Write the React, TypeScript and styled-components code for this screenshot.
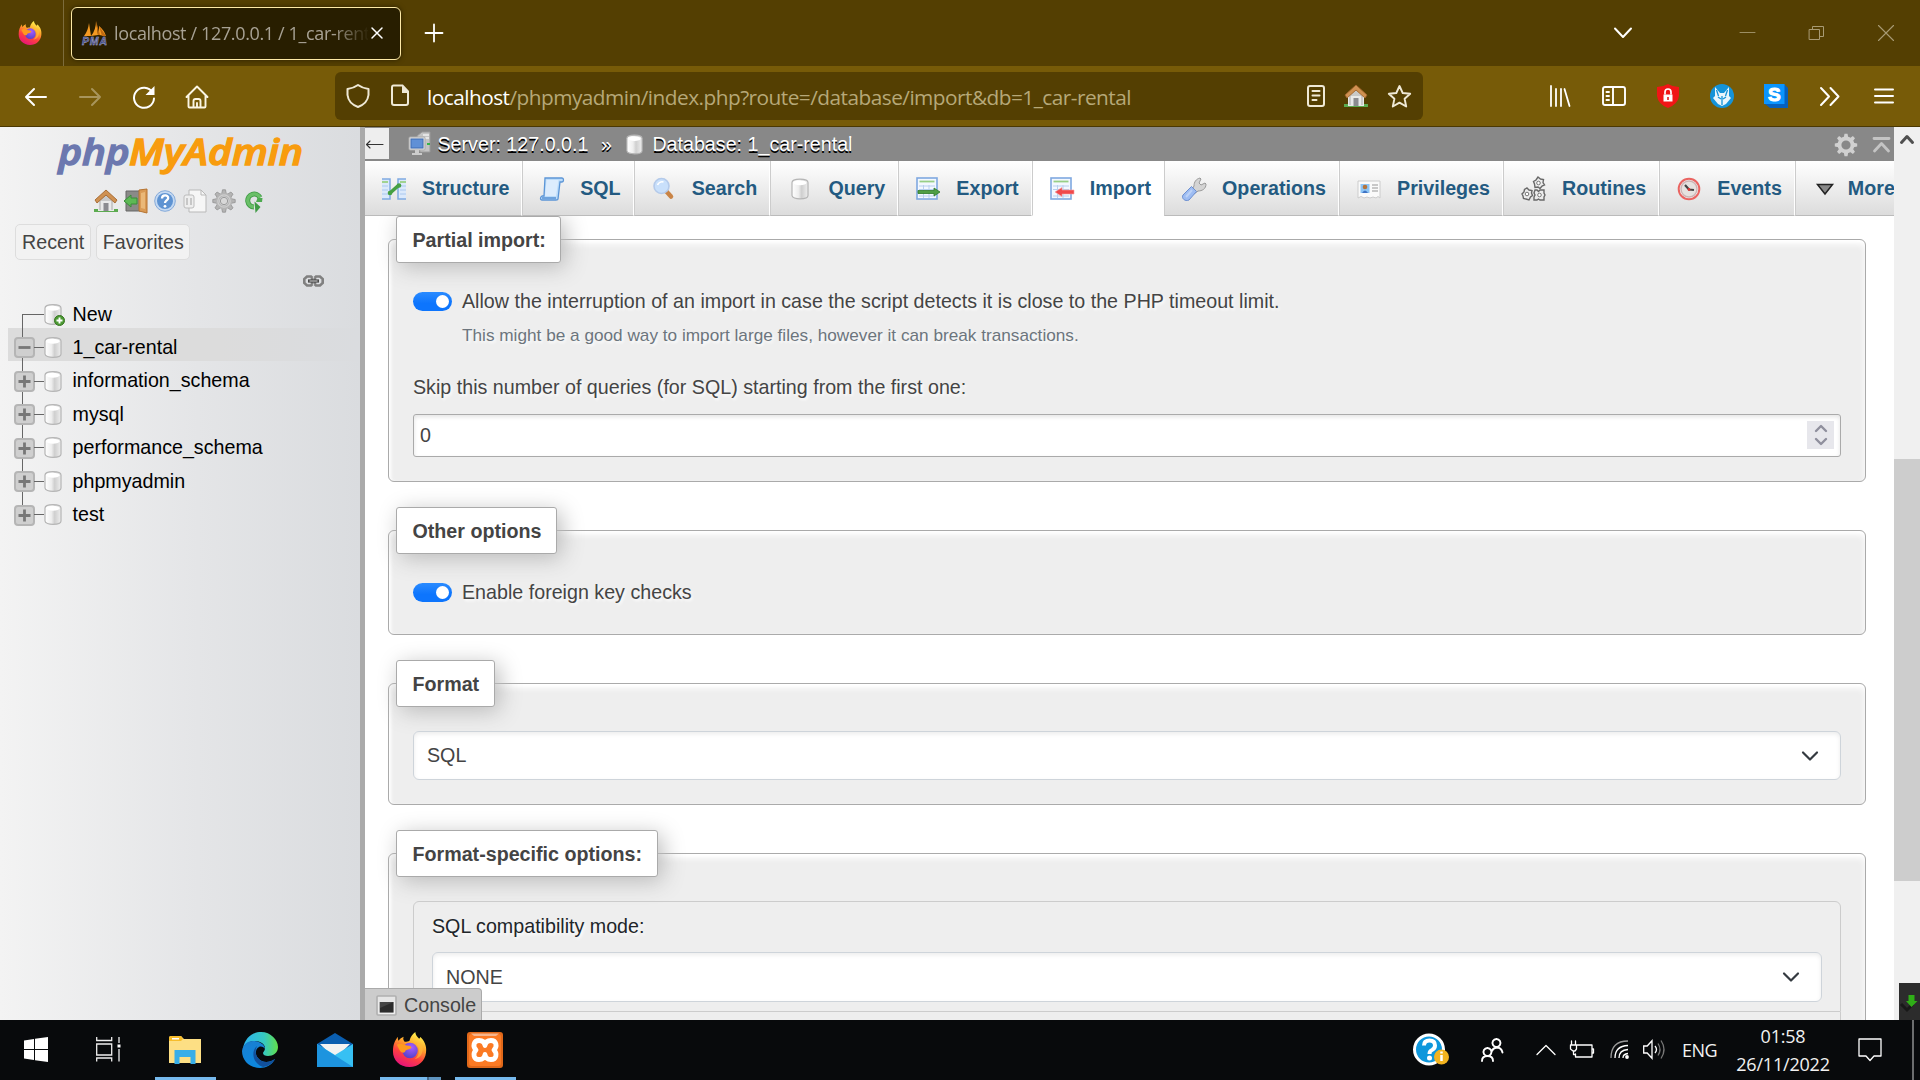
import React from "react";
import styled, { createGlobalStyle, css } from "styled-components";

const uiFont = `"Open Sans", "Noto Sans", sans-serif`;
const pageFont = `"Liberation Sans", Arial, sans-serif`;

const Global = createGlobalStyle`
  *, *::before, *::after { box-sizing: border-box; }
  html, body { margin: 0; padding: 0; background: #fff; overflow: hidden; }
  svg { display: block; flex: none; overflow: visible; }
`;

const Screen = styled.div`
  position: relative;
  width: 1920px;
  height: 1080px;
  display: flex;
  flex-direction: column;
  overflow: hidden;
  font-family: ${pageFont};
  font-size: 19.68px;
  color: #444;
`;

/* ---------- browser chrome ---------- */

const TabStrip = styled.div`
  height: 66px;
  flex: none;
  display: flex;
  align-items: center;
  background: #543f02;
`;

const PinnedTab = styled.div`
  width: 64px;
  height: 66px;
  padding: 0 3px 0 0;
  display: flex;
  align-items: center;
  justify-content: center;
  border-right: 1px solid #7d6c3c;
`;

const BrowserTab = styled.div`
  width: 330px;
  height: 53px;
  margin: 0 0 0 7px;
  padding: 0 17px 0 10px;
  display: flex;
  align-items: center;
  gap: 8px;
  border: 1px solid #fde9a6;
  border-radius: 6px;
  background: #281e00;
  box-shadow: 0 0 5px rgba(0, 0, 0, 0.5);
`;

const TabTitle = styled.span`
  flex: 1;
  margin: 0 -5px 0 -1px;
  overflow: hidden;
  white-space: nowrap;
  font: 18px/24px ${uiFont};
  letter-spacing: -0.36px;
  color: #a8a294;
  mask-image: linear-gradient(to right, #000 218px, transparent 256px);
`;

const NewTab = styled.div`
  margin-left: 24px;
`;

const WindowControls = styled.div`
  margin-left: auto;
  display: flex;
  align-items: center;
`;

const ControlCell = styled.div<{ $w: number }>`
  width: ${(p) => p.$w}px;
  height: 66px;
  display: flex;
  align-items: center;
  justify-content: center;
`;

const NavBar = styled.div`
  height: 61px;
  flex: none;
  display: flex;
  align-items: center;
  padding: 0 9px;
  background: #775b08;
  border-bottom: 1px solid #4b3802;
`;

const NavButton = styled.div`
  width: 54px;
  height: 48px;
  display: flex;
  align-items: center;
  justify-content: center;
`;

const LeftButtons = styled.div`
  display: flex;
  padding-top: 2px;
`;

const UrlBar = styled.div`
  width: 1088px;
  height: 48px;
  margin: 0 auto 0 110px;
  padding: 0 12px 0 11px;
  display: flex;
  align-items: center;
  border-radius: 6px;
  background: #543f02;
`;

const UrlText = styled.div`
  flex: 1;
  margin-left: 17px;
  padding-top: 2px;
  font: 20.8px/30px ${uiFont};
  letter-spacing: -0.52px;
  white-space: nowrap;
  color: #b6a878;
  b { font-weight: 400; color: #fff; }
`;

const UrlIcons = styled.div<{ $gap: number }>`
  display: flex;
  align-items: center;
  gap: ${(p) => p.$gap}px;
`;

/* ---------- page ---------- */

const Page = styled.div`
  height: 893px;
  flex: none;
  display: flex;
`;

const Sidebar = styled.aside`
  width: 365px;
  flex: none;
  border-right: 5px solid #aaa;
  background: linear-gradient(to right, #f3f3f3, #e4e5e7 55%, #dadcdf);
`;

const Logo = styled.div`
  height: 58px;
  padding: 0 0 0 57px;
`;

const QuickIcons = styled.div`
  height: 31px;
  padding-left: 94px;
  display: flex;
  align-items: center;
  gap: 5.6px;
`;

const PanelButtons = styled.div`
  display: flex;
  gap: 5px;
  padding: 8px 0 0 15px;
`;

const PanelButton = styled.div`
  height: 36px;
  padding: 0 5.5px 0 6px;
  border: 1px solid #ddd;
  border-radius: 5px;
  background: #f2f2f2;
  line-height: 34px;
`;

const LinkRow = styled.div`
  height: 34.5px;
  padding: 15px 0 0 303px;
`;

const TreeRow = styled.div<{ $active?: boolean }>`
  height: 33.45px;
  margin-left: 8px;
  display: flex;
  align-items: center;
  color: #000;
  ${(p) => p.$active && css`background: linear-gradient(to right, #dcdcdc 60%, #dadcdf);`}
`;

const Branch = styled.div`
  width: 26px;
  height: 33.45px;
  padding-left: 5px;
  display: flex;
  flex-direction: column;
`;

const Stem = styled.i<{ $h: number; $hidden?: boolean }>`
  width: 1px;
  height: ${(p) => p.$h}px;
  margin-left: 9px;
  background: ${(p) => (p.$hidden ? "transparent" : "#666")};
`;

const Elbow = styled.i`
  width: 22px;
  height: 14px;
  margin: 19.5px 0 0 9px;
  border-left: 1px solid #666;
  border-top: 1px solid #666;
`;

const Expander = styled.div`
  width: 21px;
  height: 21px;
  margin-left: 0.6px;
  flex: none;
  display: flex;
  align-items: center;
  justify-content: center;
  border: 2px solid #b5b5b5;
  border-radius: 4px;
  background: #cfcfcf;
`;

const Twig = styled.i<{ $on: boolean }>`
  width: 10px;
  height: 1px;
  margin-top: 6px;
  background: ${(p) => (p.$on ? "#666" : "transparent")};
`;

const TreeIcon = styled.div`
  width: 28px;
  padding-top: 6px;
`;

const TreeLabel = styled.span`
  padding-top: 5.6px;
  margin-left: 0.5px;
`;

const Main = styled.main`
  width: 1529px;
  display: flex;
  flex-direction: column;
  overflow: hidden;
  background: #fff;
`;

const ServerBar = styled.div`
  height: 34px;
  flex: none;
  display: flex;
  align-items: center;
  background: #888;
  color: #fff;
  text-shadow: 0 1.5px 0 #000;
  white-space: pre;
`;

const Collapse = styled.div`
  width: 24px;
  height: 31px;
  margin: -1px 19px 0 0;
  display: flex;
  align-items: center;
  background: #eee;
`;

const Crumb = styled.span<{ $l: number }>`
  margin-left: ${(p) => p.$l}px;
`;

const BarTools = styled.div`
  margin-left: auto;
  padding: 2px 4px 0 0;
  display: flex;
  align-items: center;
  gap: 15px;
`;

const Tabs = styled.nav`
  height: 55px;
  flex: none;
  display: flex;
`;

const Tab = styled.div<{ $active?: boolean; $first?: boolean; $last?: boolean }>`
  flex: none;
  display: flex;
  align-items: center;
  gap: ${(p) => (p.$last ? 11 : 16.1)}px;
  padding: 1px ${(p) => (p.$first ? 11.5 : 12)}px 0 17px;
  font-weight: 700;
  color: #235a81;
  white-space: nowrap;
  border-left: ${(p) => (p.$first ? "0" : "1px solid #ccc")};
  ${(p) =>
    p.$active
      ? css`background: #fff; border-right: 1px solid #fff; border-bottom: 1px solid #fff;`
      : css`
          background: linear-gradient(#fff, #dcdcdc);
          border-right: 1px solid #fff;
          border-bottom: 1px solid #bbb;
        `}
`;

const Content = styled.div`
  flex: 1;
  min-height: 0;
  padding: 23px 28px 0 23px;
  overflow: hidden;
`;

const Fieldset = styled.section<{ $h: number }>`
  height: ${(p) => p.$h}px;
  margin-bottom: 48px;
  padding: 0 24px;
  border: 1px solid #aaa;
  border-radius: 6px;
  background: #eee;
  box-shadow: 1.5px 1.5px 3px #fff inset, 0 4px 6px #fff inset;
  text-shadow: 1.5px 1.5px 3px #fff;
`;

const Legend = styled.h2`
  width: max-content;
  height: 47px;
  margin: -24px 0 0 -17px;
  padding: 0 14.5px 0 15.5px;
  border: 1px solid #aaa;
  border-radius: 3px;
  background: #fff;
  box-shadow: 4.5px 4.5px 22px #bbb;
  font-size: 19.68px;
  line-height: 46px;
  text-shadow: none;
`;

const SwitchRow = styled.label`
  display: flex;
  align-items: center;
  gap: 10px;
  height: 30px;
  margin-top: 23px;
`;

const Switch = styled.span`
  width: 39px;
  height: 19px;
  padding: 3px;
  display: flex;
  justify-content: flex-end;
  border-radius: 10px;
  background: linear-gradient(#2a8bff, #0d75fd 60%);
  &::after {
    content: "";
    width: 13px;
    height: 13px;
    border-radius: 50%;
    background: #fff;
  }
`;

const Hint = styled.p`
  margin: 6px 0 0 49px;
  font-size: 17.22px;
  line-height: 26px;
  color: #6c757d;
`;

const FieldLabel = styled.p<{ $dark?: boolean; $top: number }>`
  margin: ${(p) => p.$top}px 0 0;
  line-height: 30px;
  color: ${(p) => (p.$dark ? "#212529" : "#444")};
`;

const NumberInput = styled.div`
  height: 43px;
  margin-top: 12px;
  padding: 0 6px;
  display: flex;
  align-items: center;
  justify-content: space-between;
  border: 1px solid #aaa;
  border-radius: 3px;
  background: #fff;
  box-shadow: inset 0 2px 4px #e4e4e4;
`;

const Spinner = styled.div`
  width: 27px;
  height: 28px;
  margin-top: -1px;
  display: flex;
  align-items: center;
  justify-content: center;
  background: #e7e7ec;
`;

const Select = styled.div<{ $top: number; $h: number }>`
  height: ${(p) => p.$h}px;
  margin-top: ${(p) => p.$top}px;
  padding: 0 21px 0 13px;
  display: flex;
  align-items: center;
  justify-content: space-between;
  border: 1px solid #ced4da;
  border-radius: 6px;
  background: #fff;
  box-shadow: inset 0 2px 4px #ececec;
`;

const OptionCard = styled.div`
  height: 111px;
  margin-top: 24px;
  padding: 0 18px;
  border: 1px solid #ccc;
  border-radius: 6px 6px 0 0;
`;

const OptionNext = styled.div`
  height: 60px;
  border: solid #ccc;
  border-width: 0 1px;
`;

const ConsoleTab = styled.div`
  position: absolute;
  left: 365px;
  top: 988px;
  width: 117px;
  height: 32px;
  padding: 1px 0 0 11px;
  display: flex;
  align-items: center;
  gap: 7px;
  border: solid #aaa;
  border-width: 1px 1px 0 0;
  border-radius: 0 4px 0 0;
  background: #ccc;
`;

const ScrollTrack = styled.div`
  width: 26px;
  flex: none;
  display: flex;
  flex-direction: column;
  align-items: center;
  background: #f0f0f0;
`;

const ScrollUp = styled.div`
  height: 332px;
  padding-top: 8px;
`;

const Thumb = styled.div`
  width: 26px;
  height: 422px;
  background: #cdcdcd;
`;

const DownloadBadge = styled.div`
  width: 21px;
  height: 37px;
  margin: auto 0 0 auto;
  background: #2c2c2c;
`;

/* ---------- taskbar ---------- */

const Taskbar = styled.footer`
  height: 60px;
  flex: none;
  display: flex;
  background: #080a0c;
  color: #f2f2f2;
  font-family: ${uiFont};
`;

const TaskButton = styled.div<{ $w?: number; $pad?: number; $line?: "one" | "many" }>`
  width: ${(p) => p.$w ?? 75}px;
  height: 60px;
  padding: 0 ${(p) => p.$pad ?? 0}px 1px 0;
  display: flex;
  align-items: center;
  justify-content: center;
  background: ${(p) =>
      p.$line === "one"
        ? "linear-gradient(#76b9ed, #76b9ed)"
        : p.$line === "many"
        ? "linear-gradient(to right, #76b9ed 47px, #44698a 47px, #44698a 49px, #5e93bf 49px)"
        : "none"}
    8px bottom / 61px 3px no-repeat;
`;

const Tray = styled.div`
  margin-left: auto;
  display: flex;
  align-items: center;
`;

const TrayItem = styled.div<{ $w: number }>`
  width: ${(p) => p.$w}px;
  padding-bottom: 1px;
  display: flex;
  justify-content: center;
`;

const Lang = styled.div`
  width: 55px;
  text-align: center;
  font-size: 18px;
  line-height: 24px;
  letter-spacing: -0.6px;
  padding-bottom: 1px;
`;

const Clock = styled.div`
  width: 112px;
  text-align: center;
  font-size: 18px;
  line-height: 28px;
  letter-spacing: -0.2px;
  white-space: nowrap;
`;

const ShowDesktop = styled.div`
  width: 8px;
  height: 60px;
  border-left: 2px solid #6b6d6e;
`;

/* ---------- drawings ---------- */

type Size = { s?: number };

const Firefox = ({ s = 24, id }: Size & { id: string }) => (
  <svg width={s} height={s} viewBox="0 0 36 36">
    <defs>
      <linearGradient id={id + "a"} x1="0.8" y1="0" x2="0.35" y2="1">
        <stop offset="0.05" stopColor="#fff44f" />
        <stop offset="0.4" stopColor="#ffa02a" />
        <stop offset="0.68" stopColor="#ff4040" />
        <stop offset="1" stopColor="#e6147a" />
      </linearGradient>
      <radialGradient id={id + "b"} cx="0.6" cy="0.3" r="0.8">
        <stop offset="0" stopColor="#a85cff" />
        <stop offset="1" stopColor="#4b3fc4" />
      </radialGradient>
    </defs>
    <path d="M24 0c0 3 2 5 4 7 1-1 1-1 1-2 4 4 7 9 6 16C34 30 27 36 18 36 8 36 1 29 1 20 1 13 3 9 6 5c0 2 0 3 1 4 1-2 3-3 5-4-1 2 0 4 1 5 2 0 4 0 5-1C19 5 21 2 24 0Z" fill={`url(#${id}a)`} />
    <circle cx="18.5" cy="19" r="8" fill={`url(#${id}b)`} />
    <path d="M5 13c4-2 7 0 10 1 3 0 5 1 5 2-1 2-4 2-6 3-1 3-4 3-6 0-1-2-2-4-3-6Z" fill="#ff9a1e" />
    <path d="M25 12c4 4 4 12-2 16 7-1 10-8 8-14-2-3-4-3-6-2Z" fill="#ffbd3a" opacity="0.65" />
  </svg>
);

const PmaFavicon = () => (
  <svg width="25" height="25" viewBox="0 0 25 25">
    <path d="M7 2 9 15H2Q6 10 7 2ZM14 0l2 14-7 1Q14 9 14 0ZM17 5q5 4 7 10l-7-1Z" fill="#f59a22" />
    <path d="M14 0l2 14 2 0ZM17 5l3 10h4Z" fill="#c06a10" />
    <text x="0" y="24" fontFamily="Liberation Sans" fontWeight="700" fontStyle="italic" fontSize="10.5" textLength="25" fill="#3c4480" stroke="#b9bde0" strokeWidth="0.4">PMA</text>
  </svg>
);

const Home = ({ s = 24 }: Size) => (
  <svg width={s} height={s} viewBox="0 0 24 24">
    <path d="M0 20h24v3H0z" fill="#5cab50" />
    <path d="M4 11h16v11H4z" fill="#e9e9e9" />
    <path d="M5 11 12 5l7 6v10h-2V12H7v9H5Z" fill="#c9c9c9" />
    <path d="M9.5 14h5v8h-5z" fill="#8b8b90" />
    <path d="M12 1 1 11l2 3 9-8 9 8 2-3Z" fill="#cf9152" stroke="#a3652c" strokeWidth="0.9" />
  </svg>
);

const Exit = () => (
  <svg width="24" height="24" viewBox="0 0 24 24">
    <path d="M2 2h14v20H2z" fill="#8a8a88" stroke="#666" />
    <path d="M15 1 23 0v24l-8-2Z" fill="#d99a55" stroke="#b57331" />
    <path d="M17 4l4-1v17l-4-1Z" fill="#eab878" />
    <path d="M0 12 7 6v3h6v6H7v3Z" fill="#5db955" stroke="#3a8c3a" />
  </svg>
);

const Help = () => (
  <svg width="24" height="24" viewBox="0 0 24 24">
    <circle cx="12" cy="12" r="10.3" fill="#c4d9f2" stroke="#86abda" />
    <circle cx="12" cy="12" r="8" fill="#5e93d2" />
    <path d="M9 9.5c0-4 6.500-4 6.200-.4C15 11.500 12 11.500 12 14" fill="none" stroke="#fff" strokeWidth="2.300" />
    <circle cx="12" cy="17.300" r="1.400" fill="#fff" />
  </svg>
);

const Docs = () => (
  <svg width="24" height="24" viewBox="0 0 24 24">
    <path d="M6 1h12l5 5v17H6Z" fill="#f6f6f6" stroke="#b9b9b9" />
    <path d="M18 1v5h5" fill="none" stroke="#b9b9b9" />
    <rect x="1" y="6" width="10" height="13" rx="2" fill="#eee" stroke="#bcbcbc" />
    <path d="M4 9v7M8 9v7" stroke="#bbb" strokeWidth="1.500" />
  </svg>
);

const Gear = ({ s = 24, light }: Size & { light?: boolean }) => {
  const teeth = Array.from({ length: 8 }, (_, i) => i * 45);
  const fill = light ? "#d0d0d0" : "#b4b4b4";
  return (
    <svg width={s} height={s} viewBox="0 0 24 24">
      {teeth.map((a) => (
        <path key={a} d="M9.800 4.500 10.500 0.800h3L14.200 4.500Z" transform={`rotate(${a} 12 12)`} fill={fill} stroke={light ? "none" : "#929292"} strokeWidth="0.800" />
      ))}
      <circle cx="12" cy="12" r="6.500" fill="none" stroke={fill} strokeWidth="3.800" />
      {!light && <circle cx="12" cy="12" r="3.700" fill="#d8d8d8" stroke="#999" />}
      {!light && <circle cx="12" cy="12" r="6.200" fill="none" stroke="#cfcfcf" strokeWidth="1.200" />}
    </svg>
  );
};

const Reload = () => (
  <svg width="24" height="24" viewBox="0 0 24 24">
    <path d="M18 8.500A6.500 6.500 0 1 0 12 18" fill="none" stroke="#3f9b45" strokeWidth="5" />
    <path d="M18 8.500A6.500 6.500 0 1 0 12 18" fill="none" stroke="#6abf68" strokeWidth="3.400" />
    <path d="M15.500 9h5l-.5 4h-6Z" fill="#4dab50" />
    <path d="m12.500 12.500 6 5.500-5 6Z" fill="#3f9b45" />
  </svg>
);

const Chain = () => (
  <svg width="21" height="12" viewBox="0 0 21 12">
    <path d="M9.500 3 8 1.500H4L1.300 4v4L4 10.500h4L9.500 9M11.500 3 13 1.500h4L19.700 4v4L17 10.500h-4L11.500 9M9 3v6M12 3v6" fill="none" stroke="#808080" strokeWidth="2.600" />
    <path d="M5 6h11" stroke="#4a4a4a" strokeWidth="3.200" />
    <path d="M6.500 6h8" stroke="#ddd" strokeWidth="0.900" />
  </svg>
);

const Database = ({ w = 18, h = 21, plus }: { w?: number; h?: number; plus?: boolean }) => (
  <svg width={w} height={h} viewBox="0 0 18 21">
    <defs>
      <linearGradient id="cyl">
        <stop offset="0" stopColor="#fff" />
        <stop offset="0.400" stopColor="#eee" />
        <stop offset="0.600" stopColor="#cfcfcf" />
        <stop offset="1" stopColor="#eee" />
      </linearGradient>
    </defs>
    <path d="M1 4c0-4.500 16-4.500 16 0v13c0 4.500-16 4.500-16 0Z" fill="url(#cyl)" stroke="#b5b5b5" strokeWidth="1.200" />
    <ellipse cx="9" cy="4.300" rx="6.500" ry="2.500" fill="#fff" />
    {plus && <circle cx="15.500" cy="16.500" r="5" fill="#4d9a34" stroke="#35751f" />}
    {plus && <path d="M15.500 13.500v6M12.500 16.500h6" stroke="#fff" strokeWidth="1.900" />}
  </svg>
);

const ServerIcon = () => (
  <svg width="24" height="24" viewBox="0 0 24 24">
    <path d="M9 4 14 0h8v20H12Z" fill="#c4c4c4" stroke="#9a9a9a" />
    <path d="M15 3h6M15 6h6" stroke="#eee" strokeWidth="1.500" />
    <path d="M19 11h3v2h-3z" fill="#35b34a" />
    <rect x="1" y="5" width="16" height="13" rx="1" fill="#e2e2e2" stroke="#aaa" />
    <rect x="3" y="7" width="12" height="9" fill="#6090d6" stroke="#3f6db4" />
    <path d="M7 18h4v3h3v2H4v-2h3Z" fill="#ccc" />
  </svg>
);

const TableIcon = ({ dir }: { dir: "out" | "in" }) => (
  <svg width="24" height="24" viewBox="0 0 24 24">
    <rect x="1" y="1" width="20" height="21" fill="#f3f8ff" stroke="#7fa8e0" strokeWidth="1.600" />
    <path d="M3.500 4.500h15" stroke="#98cf86" strokeWidth="1.800" />
    <path d="M3 9h16M3 12.500h16M3 19h16M7.500 8v13M13 8v13" stroke="#b8d0ef" strokeWidth="1" />
    {dir === "out" ? (
      <path d="M2 13.500h16v-2.500l6 4-6 4v-2.500H2Z" fill="#4f9e45" stroke="#2d7a28" strokeWidth="0.800" />
    ) : (
      <path d="M24 13H12v-2.500L5 15l7 4.500V17h12Z" fill="#f0494c" stroke="#f8a0a0" strokeWidth="0.600" />
    )}
  </svg>
);

const StructureIcon = () => (
  <svg width="24" height="24" viewBox="0 0 24 24">
    <path d="M0 2h8v20H0M24 2h-8v20h8" fill="#dbe9fb" stroke="#80aae2" strokeWidth="1.500" />
    <path d="M0 5h6M18 5h6" stroke="#8ecb6d" strokeWidth="1.500" />
    <path d="M0 9h6M0 13h6M0 17h6M18 9h6M18 13h6M18 17h6" stroke="#abc8ee" />
    <path d="M8 16 17 8" stroke="#46a043" strokeWidth="3.600" />
    <circle cx="8" cy="16" r="2.300" fill="#46a043" />
    <circle cx="17" cy="8.500" r="2.300" fill="#46a043" />
  </svg>
);

const SqlIcon = () => (
  <svg width="24" height="24" viewBox="0 0 24 24">
    <path d="M5 1h17c2 0 2 4 0 4h-2l-2 17c0 1-1 1-2 1H2c-2 0-2-3 0-4h2Z" fill="#bcdcfa" stroke="#5c95d6" strokeWidth="1.300" />
    <path d="M6.500 3h12L16 19H5Z" fill="#dcecfd" />
    <path d="M2 21h14" stroke="#5c95d6" strokeWidth="1.600" />
  </svg>
);

const SearchIcon = () => (
  <svg width="24" height="24" viewBox="0 0 24 24">
    <path d="m14 14 5 5.500" stroke="#c98446" strokeWidth="4.500" strokeLinecap="round" />
    <circle cx="9.500" cy="9" r="7.500" fill="#c9e0fb" stroke="#b4caea" strokeWidth="1.600" />
    <path d="M5.500 8a5 5 0 0 1 6-3" fill="none" stroke="#fff" strokeWidth="1.600" />
  </svg>
);

const Wrench = () => (
  <svg width="24" height="24" viewBox="0 0 24 24">
    <path d="M12 9c0-4 2-7 6-8l1 1-2 4 2 2 4-2 1 1c0 5-4 7-8 7l-4 3-3-3Z" fill="#d4d4d4" stroke="#999" />
    <path d="m9.500 9.500 5 5-7.500 8.500c-4 2-8-2-6-5Z" fill="#9dbcf2" stroke="#6c8fd0" />
    <path d="m10 13-6 7" stroke="#bcd2f7" strokeWidth="2" />
  </svg>
);

const IdCard = () => (
  <svg width="24" height="24" viewBox="0 0 24 24">
    <path d="M1 4h22v17q-2-3-4 0-3-2-6 0-3-2-6 0-3-3-6 0Z" fill="#fafafa" stroke="#ccc" />
    <path d="M3.500 7h9v9h-9z" fill="#8cc4f5" />
    <circle cx="8" cy="10" r="2.300" fill="#b4743c" />
    <path d="M5 16q3-5 6 0Z" fill="#3e73c4" />
    <path d="M15 8h6M15 11h6M15 14h6" stroke="#b8b8b8" strokeWidth="1.300" />
  </svg>
);

const RoutinesIcon = () => (
  <svg width="25" height="25" viewBox="0 0 25 25">
    <g fill="#ececec" stroke="#686868" strokeWidth="1.400">
      <path d="m17 1 2.500 2 3 .5-.5 3 1.500 2.500-2.500 1-2 2.500-2-1.500-3 .500L13.500 8l-1-2.500L15 4Z" />
      <path d="m6 12 2 2 3 .500-.500 2.500 1 2.500-2 1.500L8 24l-3-1-2.500-.500L2 20l-1-2 2-2 .500-2.500Z" />
      <path d="M14 14h2l1.500 1.500L19 14h4v3l1 2-1 2v3h-4l-1.500-1L16 24h-3v-3l1-2-1-2Z" />
    </g>
    <circle cx="17.500" cy="7" r="1.800" fill="#fff" stroke="#777" />
    <circle cx="6" cy="18" r="1.800" fill="#fff" stroke="#777" />
    <circle cx="18.500" cy="19" r="1.800" fill="#fff" stroke="#777" />
  </svg>
);

const ClockIcon = () => (
  <svg width="24" height="24" viewBox="0 0 24 24">
    <circle cx="12" cy="12" r="10.300" fill="#f3efee" stroke="#ea6461" strokeWidth="2" />
    <circle cx="12" cy="12" r="8" fill="#e6e2df" stroke="#cdb4b4" strokeWidth="1.400" />
    <path d="m8 8 4 4.500 5 .500" fill="none" stroke="#444" strokeWidth="2.200" />
    <circle cx="12" cy="12.500" r="1.400" fill="#d33" />
  </svg>
);

const ConsoleIcon = () => (
  <svg width="21" height="21" viewBox="0 0 21 21">
    <rect x="1" y="1" width="19" height="19" rx="1" fill="#e6e6e6" stroke="#b0b0b0" strokeWidth="1.600" />
    <path d="M3.200 6.500h14.800v11.500H3.200z" fill="#2c2c2c" stroke="#fff" strokeWidth="0.800" />
    <path d="M4 7h13.500L4 13Z" fill="#454545" />
  </svg>
);

const Stroke = ({ w, h, d, c = "#fff", sw = 2, fill = "none" }: { w: number; h: number; d: string; c?: string; sw?: number; fill?: string }) => (
  <svg width={w} height={h} viewBox={`0 0 ${w} ${h}`}>
    <path d={d} fill={fill} stroke={c} strokeWidth={sw} strokeLinecap="round" strokeLinejoin="round" />
  </svg>
);

/* ---------- content data ---------- */

const databases = ["1_car-rental", "information_schema", "mysql", "performance_schema", "phpmyadmin", "test"];

const tabs: { label: string; icon: React.ReactNode; active?: boolean }[] = [
  { label: "Structure", icon: <StructureIcon /> },
  { label: "SQL", icon: <SqlIcon /> },
  { label: "Search", icon: <SearchIcon /> },
  { label: "Query", icon: <DbTab /> },
  { label: "Export", icon: <TableIcon dir="out" /> },
  { label: "Import", icon: <TableIcon dir="in" />, active: true },
  { label: "Operations", icon: <Wrench /> },
  { label: "Privileges", icon: <IdCard /> },
  { label: "Routines", icon: <RoutinesIcon /> },
  { label: "Events", icon: <ClockIcon /> },
  { label: "More", icon: <MoreIcon /> },
];

function DbTab() {
  return (
    <svg width="24" height="24" viewBox="0 0 24 24">
      <g transform="translate(3 1)"><Database w={18} h={22} /></g>
    </svg>
  );
}

function MoreIcon() {
  return (
    <svg width="24" height="24" viewBox="0 0 24 24">
      <path d="M4.500 7.500h15L12 17Z" fill="#888" stroke="#222" strokeWidth="1.500" />
    </svg>
  );
}

const SelectArrow = () => <Stroke w={18} h={18} d="m2 5.500 7 7 7-7" c="#343a40" sw={2.200} />;

/* ---------- sections ---------- */

const BrowserChrome = () => (
  <>
    <TabStrip>
      <PinnedTab><Firefox id="pin" s={24} /></PinnedTab>
      <BrowserTab>
        <PmaFavicon />
        <TabTitle>localhost / 127.0.0.1 / 1_car-rental</TabTitle>
        <Stroke w={12} h={12} d="M1 1l10 10M11 1 1 11" sw={1.500} />
      </BrowserTab>
      <NewTab><Stroke w={18} h={18} d="M9 .500v17M.500 9h17" sw={1.800} /></NewTab>
      <WindowControls>
        <ControlCell $w={91}><Stroke w={18} h={12} d="m1 1.500 8 8.500 8-8.500" /></ControlCell>
        <ControlCell $w={45} />
        <ControlCell $w={69}><Stroke w={15} h={2} d="M0 .500h15" c="#9c8e63" sw={1} /></ControlCell>
        <ControlCell $w={69}><Stroke w={15} h={14} d="M.500 3.500h10v10h-10zM3.500 3.500v-3h11v10h-4" c="#a89b74" sw={1} /></ControlCell>
        <ControlCell $w={69}><Stroke w={16} h={16} d="M.500 .500l15 15M15.500 .500l-15 15" c="#a89b74" sw={1.100} /></ControlCell>
      </WindowControls>
    </TabStrip>
    <NavBar>
      <LeftButtons>
        <NavButton><Stroke w={22} h={18} d="M21 9H1M9 1 1 9l8 8" /></NavButton>
        <NavButton><Stroke w={22} h={18} d="M1 9h20M13 1l8 8-8 8" c="#a8955c" /></NavButton>
        <NavButton>
          <svg width="24" height="24" viewBox="0 0 24 24">
            <path d="M20.500 7.500A10 10 0 1 0 22 13.500" fill="none" stroke="#fff" strokeWidth="2" strokeLinecap="round" />
            <path d="M22.500 1v9h-9Z" fill="#fff" />
          </svg>
        </NavButton>
        <NavButton><Stroke w={24} h={24} d="M.500 12 11 1.500 21.500 12M2.500 10.500V21.500q0 1 1 1h15q1 0 1-1V10.500M7.500 22v-6q0-2 2-2h3q2 0 2 2v6M11 18v4" c="#fbf6e4" sw={1.900} /></NavButton>
      </LeftButtons>
      <UrlBar>
        <UrlIcons $gap={20}>
          <Stroke w={24} h={24} d="M12 1q-4 3-10.500 4v6q1 8.500 10.500 12 9.500-3.500 10.500-12V5Q16 4 12 1Z" c="#efe9d6" />
          <svg width="20" height="24" viewBox="0 0 20 24">
            <path d="M3.500 3h9l5.500 6v11.500q0 2-2 2H4q-2 0-2-2V5q0-2 1.500-2Z" transform="translate(0 -1.500)" fill="none" stroke="#efe9d6" strokeWidth="2" />
            <path d="M12 1.500v7.500h7Z" fill="#efe9d6" />
          </svg>
        </UrlIcons>
        <UrlText><b>localhost</b>/phpmyadmin/index.php?route=/database/import&amp;db=1_car-rental</UrlText>
        <UrlIcons $gap={19}>
          <Stroke w={18} h={22} d="M3 1h12q2 0 2 2v16q0 2-2 2H3q-2 0-2-2V3q0-2 2-2ZM5.500 6h7M5.500 10.500h7M5.500 15h4" c="#efe9d6" />
          <Home s={24} />
          <Stroke w={24} h={23} d="m12.500 1 3.200 7 7.500.800-5.600 5 1.600 7.700L12.500 17.600l-6.700 3.900 1.600-7.700-5.600-5 7.500-.800Z" c="#efe9d6" sw={1.900} />
        </UrlIcons>
      </UrlBar>
      <NavButton><Stroke w={20} h={22} d="M1 1v20M6 4v17M11 4v17M14.500 4l5 17" sw={1.800} /></NavButton>
      <NavButton><Stroke w={24} h={20} d="M3 1h18q2 0 2 2v14q0 2-2 2H3q-2 0-2-2V3q0-2 2-2ZM11 1v18M4.500 6H7M4.500 10H7M4.500 14H7" sw={1.900} /></NavButton>
      <NavButton>
        <svg width="22" height="24" viewBox="0 0 22 24">
          <path d="M11 0q5 3 11 3v9q-1 8-11 12Q1 20 0 12V3q6 0 11-3Z" fill="#f01616" />
          <path d="M6.500 10.500h9v7h-9z" fill="#fff" />
          <path d="M8 10.500V8q0-3 3-3t3 3v2.500" fill="none" stroke="#fff" strokeWidth="1.700" />
          <path d="M11 13v3" stroke="#d11" strokeWidth="1.500" />
        </svg>
      </NavButton>
      <NavButton>
        <svg width="24" height="24" viewBox="0 0 24 24">
          <circle cx="12" cy="12" r="12" fill="#1593d8" />
          <path d="m5 3 5 6h4l5-6v9l2 2-5 6-4 2-4-2-5-6 2-2Z" fill="#e9f5fb" />
          <path d="m6.500 6 2 6M17.500 6l-2 6M8 13l3 2M16 13l-3 2M12 12v9" stroke="#1593d8" strokeWidth="1.300" />
        </svg>
      </NavButton>
      <NavButton>
        <svg width="24" height="24" viewBox="0 0 24 24">
          <path d="M20 0l4 4v20H6l-5-4Z" fill="#0660bd" />
          <path d="M0 0h20.500v20H0z" fill="#0a95ff" />
          <text x="4" y="16.500" fontFamily="Liberation Sans" fontWeight="700" fontSize="19" fill="#fff" stroke="#fff">S</text>
        </svg>
      </NavButton>
      <NavButton><Stroke w={20} h={19} d="m1 1 8 8.500-8 8.500M10.500 1l8 8.500-8 8.500" /></NavButton>
      <NavButton><Stroke w={18} h={16} d="M0 1.500h18M0 8h18M0 14.500h18" /></NavButton>
    </NavBar>
  </>
);

const Navigation = () => (
  <Sidebar>
    <Logo>
      <svg width="247" height="48" viewBox="0 0 247 48">
        <g fontFamily="Open Sans, sans-serif" fontWeight="600" fontStyle="italic" fontSize="36.500">
          <text x="1.500" y="37.500" textLength="71" lengthAdjust="spacingAndGlyphs" fill="#6c78af" stroke="#6c78af" strokeWidth="1.400">php</text>
          <text x="72" y="37.500" textLength="174" lengthAdjust="spacingAndGlyphs" fill="#f89c0e" stroke="#f89c0e" strokeWidth="1.400">MyAdmin</text>
        </g>
      </svg>
    </Logo>
    <QuickIcons><Home /><Exit /><Help /><Docs /><Gear /><Reload /></QuickIcons>
    <PanelButtons><PanelButton>Recent</PanelButton><PanelButton>Favorites</PanelButton></PanelButtons>
    <LinkRow><Chain /></LinkRow>
    <TreeRow>
      <Branch><Elbow /></Branch>
      <Twig $on={false} />
      <TreeIcon><Database plus /></TreeIcon>
      <TreeLabel>New</TreeLabel>
    </TreeRow>
    {databases.map((name, i) => (
      <TreeRow key={name} $active={i === 0}>
        <Branch>
          <Stem $h={9.5} />
          <Expander>
            <svg width="13" height="13" viewBox="0 0 13 13">
              <path d={i === 0 ? "M.500 6.500h12" : "M.500 6.500h12M6.500 .500v12"} stroke="#777" strokeWidth="2.800" />
            </svg>
          </Expander>
          <Stem $h={3} $hidden={i === databases.length - 1} />
        </Branch>
        <Twig $on />
        <TreeIcon><Database /></TreeIcon>
        <TreeLabel>{name}</TreeLabel>
      </TreeRow>
    ))}
  </Sidebar>
);

const ImportForm = () => (
  <Content>
    <Fieldset $h={243}>
      <Legend>Partial import:</Legend>
      <SwitchRow><Switch />Allow the interruption of an import in case the script detects it is close to the PHP timeout limit.</SwitchRow>
      <Hint>This might be a good way to import large files, however it can break transactions.</Hint>
      <FieldLabel $top={24}>Skip this number of queries (for SQL) starting from the first one:</FieldLabel>
      <NumberInput>
        0
        <Spinner><Stroke w={12} h={20} d="m1 6 5-5 5 5M1 14l5 5 5-5" c="#8f8f9d" sw={2.400} /></Spinner>
      </NumberInput>
    </Fieldset>
    <Fieldset $h={105}>
      <Legend>Other options</Legend>
      <SwitchRow><Switch />Enable foreign key checks</SwitchRow>
    </Fieldset>
    <Fieldset $h={122}>
      <Legend>Format</Legend>
      <Select $top={24} $h={49}>SQL<SelectArrow /></Select>
    </Fieldset>
    <Fieldset $h={260}>
      <Legend>Format-specific options:</Legend>
      <OptionCard>
        <FieldLabel $dark $top={9}>SQL compatibility mode:</FieldLabel>
        <Select $top={11} $h={50}>NONE<SelectArrow /></Select>
      </OptionCard>
      <OptionNext />
    </Fieldset>
  </Content>
);

const WindowsTaskbar = () => (
  <Taskbar>
    <TaskButton $w={72}>
      <svg width="24" height="25" viewBox="0 0 24 25"><path d="M0 3.500 10 2v10H0ZM11 1.800 24 0v12H11ZM0 13h10v10L0 21.500ZM11 13h13v12l-13-1.800Z" fill="#fff" /></svg>
    </TaskButton>
    <TaskButton $pad={3}>
      <svg width="24" height="25" viewBox="0 0 24 25"><path d="M.700 0v3.500h15V0M.700 7h15v11h-15ZM.700 24.500V21h15v3.500M23 0v6M23 12v12.500" fill="none" stroke="#eee" strokeWidth="1.300" /><path d="M21.500 7.500h3v3h-3z" fill="#fff" /></svg>
    </TaskButton>
    <TaskButton $line="one">
      <svg width="32" height="28" viewBox="0 0 32 28">
        <path d="M0 2q0-2 2-2h10l3 3h17v24H0Z" fill="#fddf84" />
        <path d="M0 2q0-2 2-2h10l2 3-2 2H0Z" fill="#f7bd2b" /><path d="M3 2h7v1.500H3z" fill="#fff" />
        <path d="M5.500 28V14h21v14h-5v-7h-11v7Z" fill="#38aee8" />
      </svg>
    </TaskButton>
    <TaskButton>
      <svg width="36" height="36" viewBox="0 0 36 36">
        <defs>
          <linearGradient id="eg"><stop offset="0" stopColor="#2cb4f0" /><stop offset="0.600" stopColor="#36c9c2" /><stop offset="1" stopColor="#62df49" /></linearGradient>
          <linearGradient id="eb" x2="0.300" y2="1"><stop offset="0" stopColor="#1a7fd0" /><stop offset="1" stopColor="#0c88e0" /></linearGradient>
        </defs>
        <path d="M1 16C3 6 10 0 19 0c10 0 17 8 17 15 0 6-5 9-10 9-3 0-5-1-5-3 0-1 2-2 2-5 0-4-5-7-10-7-6 0-10 3-12 7Z" fill="url(#eg)" />
        <path d="M0 19C1 12 6 9 11 9c7 0 12 4 12 8-1-2-4-3-6-2-4 2-4 8-1 11 4 5 11 5 17 1-3 6-9 9-15 9C8 36 0 29 0 19Z" fill="url(#eb)" />
        <path d="M15 14c-6 5-5 17 6 21 6-1 10-4 12-8-6 4-13 4-17-1-3-4-3-8-1-12Z" fill="#11509c" />
      </svg>
    </TaskButton>
    <TaskButton>
      <svg width="36" height="34" viewBox="0 0 36 34">
        <path d="M0 11 18 0l18 11v7H0Z" fill="#0a5eb0" /><path d="M3 11h30L20 24h-4Z" fill="#f2f2f2" />
        <path d="M0 11l18 11L36 11v23H0Z" fill="#37c0f3" /><path d="M0 11l36 23H0Z" fill="#1d94df" />
      </svg>
    </TaskButton>
    <TaskButton $line="many"><Firefox id="task" s={35} /></TaskButton>
    <TaskButton $line="one">
      <svg width="36" height="36" viewBox="0 0 36 36">
        <rect width="36" height="36" rx="3" fill="#e0681a" /><rect x="2" y="2" width="32" height="32" rx="3" fill="#fb7a24" />
        <path d="M4 1.500h28L29 4H7Z" fill="#f6b58c" />
        <path d="M18 13.500C17.500 9.500 15 8.500 12 8.500 6.500 8.500 5.500 14.500 9 18 5.500 21.500 6.500 27.500 12 27.500c3 0 5.500-1 6-5 .500 4 3 5 6 5 5.500 0 6.500-6 3-9.500 3.500-3.500 2.500-9.500-3-9.500-3 0-5.500 1-6 5Z" fill="none" stroke="#fff" strokeWidth="4.800" strokeLinejoin="round" />
      </svg>
    </TaskButton>
    <Tray>
      <TrayItem $w={62}>
        <svg width="36" height="33" viewBox="0 0 36 33">
          <circle cx="16" cy="16.500" r="14.500" fill="#0e97dc" stroke="#fff" strokeWidth="3" />
          <path d="M11 12.500q0-5 5.500-5t5.500 5q0 3-3 4.500-2.500 1-2.500 4" fill="none" stroke="#fff" strokeWidth="4" />
          <circle cx="16.500" cy="25" r="2.500" fill="#fff" />
          <circle cx="28.500" cy="24" r="7.500" fill="#f2b31f" /><path d="M28.500 22v6M28.500 18.500v2" stroke="#fff" strokeWidth="2.500" />
        </svg>
      </TrayItem>
      <TrayItem $w={60}>
        <Stroke w={22} h={24} d="M15.500 1a4 4 0 1 1-.1 0M6.500 10a4 4 0 1 1-.1 0M1 23q0-5 5.500-5t5.500 5M11 13q1-3 4.500-3.500 5 0 6 5" sw={1.900} />
      </TrayItem>
      <TrayItem $w={47}><Stroke w={18} h={10} d="m0 9.500 9-9 9 9" sw={1.300} /></TrayItem>
      <TrayItem $w={26}><Stroke w={24} h={17} d="M7 4h15v12H5.500v-3M22 8h1.500v4H22M1.500 0v4M5.500 0v4M.500 4h6v4l-1.500 2h-2L.500 8ZM3.500 10v3.500h2" sw={1.300} /></TrayItem>
      <TrayItem $w={48}>
        <svg width="19" height="19" viewBox="0 0 19 19"><g fill="none" stroke="#fff" strokeWidth="1.300"><path d="M1 18Q1 1 18 1" stroke="#999" /><path d="M5 18Q5 6 18 5.500M9 18q0-8 9-8.500M13 18q0-4 5-4.500" /></g><circle cx="17" cy="17" r="1.900" fill="#fff" /></svg>
      </TrayItem>
      <TrayItem $w={22}>
        <svg width="23" height="19" viewBox="0 0 23 19"><path d="M.700 6h3.500L9 .700v17.600L4.200 13H.700ZM12 6q3 3.500 0 7" fill="none" stroke="#fff" strokeWidth="1.300" /><path d="M15 3.500q4 6 0 12M18 .500q6 9 0 18" fill="none" stroke="#777" strokeWidth="1.300" /></svg>
      </TrayItem>
      <TrayItem $w={7} />
      <Lang>ENG</Lang>
      <Clock>01:58<br />26/11/2022</Clock>
      <TrayItem $w={62}><Stroke w={24} h={24} d="M1 1h22v17h-7l-4 4.500-4-4.500H1Z" sw={1.300} /></TrayItem>
      <TrayItem $w={11} />
      <ShowDesktop />
    </Tray>
  </Taskbar>
);

export default function App() {
  return (
    <>
      <Global />
      <Screen>
        <BrowserChrome />
        <Page>
          <Navigation />
          <Main>
            <ServerBar>
              <Collapse><Stroke w={19} h={9} d="M18 5.500H1.500M5 2 1.500 5.500 5 9" c="#333" sw={1.100} /></Collapse>
              <ServerIcon />
              <Crumb $l={5.500}>Server: 127.0.0.1</Crumb>
              <Crumb $l={12.500}>»</Crumb>
              <Crumb $l={14.500}><Database w={17} h={21} /></Crumb>
              <Crumb $l={9}>Database: 1_car-rental</Crumb>
              <BarTools>
                <Gear light s={24} />
                <Stroke w={17} h={16} d="M1 1.500h15M1.500 14l7-7.500 7 7.500" c="#c4c4c4" sw={2.800} />
              </BarTools>
            </ServerBar>
            <Tabs>
              {tabs.map((t, i) => (
                <Tab key={t.label} $active={t.active} $first={i === 0} $last={i === tabs.length - 1}>{t.icon}{t.label}</Tab>
              ))}
            </Tabs>
            <ImportForm />
          </Main>
          <ScrollTrack>
            <ScrollUp><Stroke w={14} h={9} d="m1.500 7.500 5.500-6 5.500 6" c="#505050" sw={3} /></ScrollUp>
            <Thumb />
            <DownloadBadge>
              <svg width="21" height="37" viewBox="0 0 21 37">
                <path d="m2 21 6 6 6-6" fill="none" stroke="#181818" strokeWidth="3" />
                <path d="M9.500 12h6v6h3L12.500 24l-5.500-6h2.500Z" fill="#2fae17" />
              </svg>
            </DownloadBadge>
          </ScrollTrack>
        </Page>
        <WindowsTaskbar />
        <ConsoleTab><ConsoleIcon />Console</ConsoleTab>
      </Screen>
    </>
  );
}
